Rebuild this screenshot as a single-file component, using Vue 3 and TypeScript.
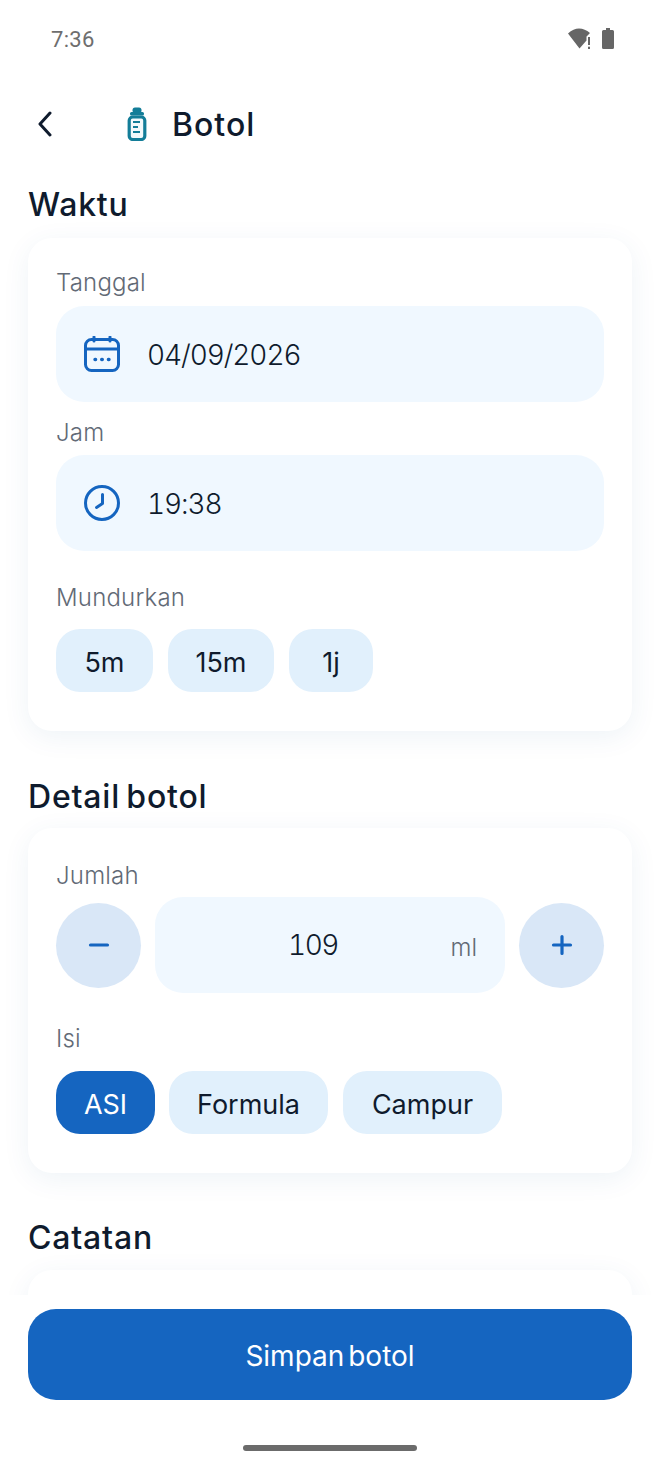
<template>
  <div class="screen">
    <div class="status-bar">
      <span class="clock">7:36</span>
      <div class="status-icons">
        <svg class="wifi" viewBox="0 0 24 21" fill="#666">
          <path d="M1 5.500C4.500 2 8.500 0.500 12 0.500c4 0 7.500 1.500 11 4.500L19.500 8.500v4L12.500 20.500z" />
          <rect x="21" y="9" width="2" height="8" />
          <rect x="21" y="18.700" width="2" height="2.300" />
        </svg>
        <svg class="battery" viewBox="0 0 12 21" fill="#666">
          <path d="M4 0h4v2h2.500a1.500 1.500 0 0 1 1.500 1.500v16a1.500 1.500 0 0 1-1.500 1.500h-9A1.500 1.500 0 0 1 0 19.500v-16A1.500 1.500 0 0 1 1.500 2H4z" />
        </svg>
      </div>
    </div>

    <header class="top-bar">
      <svg class="back" viewBox="0 0 16 26" fill="none" stroke="#0f1b2d" stroke-width="3" stroke-linecap="round" stroke-linejoin="round">
        <polyline points="13,2 3,13 13,24" />
      </svg>
      <svg class="bottle" viewBox="0 0 20 34">
        <rect x="5.500" y="0.500" width="9" height="5.500" rx="2.500" fill="#137d98" />
        <rect x="3" y="5" width="14" height="3.500" rx="1.500" fill="#137d98" />
        <rect x="2.200" y="10" width="15.600" height="22.500" rx="3.500" fill="#f2f9fb" stroke="#137d98" stroke-width="3.200" />
        <path d="M6 15h7M6 20h5M6 25h7" stroke="#137d98" stroke-width="1.800" />
      </svg>
      <h1 class="title">Botol</h1>
    </header>

    <h2 class="section-title waktu">Waktu</h2>
    <section class="card">
      <div class="label">Tanggal</div>
      <div class="field">
        <svg class="field-icon" viewBox="0 0 36 36" fill="none" stroke="#1565c0" stroke-width="3" stroke-linecap="round">
          <rect x="1.500" y="3.500" width="33" height="31" rx="6" />
          <path d="M1.500 13h33M10 1v4M26 1v4" />
          <path d="M11 23.500h.6M17.700 23.500h.6M24.400 23.500h.6" stroke-width="3.400" />
        </svg>
        <span class="field-value">04/09/2026</span>
      </div>
      <div class="label jam">Jam</div>
      <div class="field">
        <svg class="field-icon" viewBox="0 0 36 36" fill="none" stroke="#1565c0" stroke-width="3" stroke-linecap="round" stroke-linejoin="round">
          <circle cx="18" cy="18" r="16.500" />
          <polyline points="18.500,9.500 18.500,18.500 12.500,22.500" />
        </svg>
        <span class="field-value">19:38</span>
      </div>
      <div class="label mundur">Mundurkan</div>
      <div class="chips rewind-row">
        <button v-for="chip in rewindChips" :key="chip" class="chip rewind">{{ chip }}</button>
      </div>
    </section>

    <h2 class="section-title detail">Detail botol</h2>
    <section class="card card-detail">
      <div class="label">Jumlah</div>
      <div class="stepper">
        <button class="round-btn">
          <svg viewBox="0 0 22 22" stroke="#1565c0" stroke-width="3.200" stroke-linecap="round"><path d="M2.500 11h17" /></svg>
        </button>
        <div class="amount">
          <span class="amount-value">109</span>
          <span class="amount-unit">ml</span>
        </div>
        <button class="round-btn">
          <svg viewBox="0 0 22 22" stroke="#1565c0" stroke-width="3.200" stroke-linecap="round"><path d="M2.500 11h17M11 2.500v17" /></svg>
        </button>
      </div>
      <div class="label isi">Isi</div>
      <div class="chips">
        <button
          v-for="kind in kinds"
          :key="kind.name"
          class="chip"
          :class="[kind.cls, { active: kind.name === selectedKind }]"
        >{{ kind.name }}</button>
      </div>
    </section>

    <h2 class="section-title catatan">Catatan</h2>
    <section class="card card-note"></section>

    <!-- tombol simpan menempel di bawah, menutupi konten yang discroll -->
    <div class="footer">
      <button class="save">Simpan botol</button>
      <div class="home-bar"></div>
    </div>
  </div>
</template>

<script setup lang="ts">
interface Kind {
  name: string
  cls: string
}

const rewindChips: string[] = ['5m', '15m', '1j']

const kinds: Kind[] = [
  { name: 'ASI', cls: 'k-asi' },
  { name: 'Formula', cls: 'k-formula' },
  { name: 'Campur', cls: 'k-campur' },
]

const selectedKind = 'ASI'
</script>

<style>
html,
body {
  margin: 0;
  background: #fff;
}
</style>

<style scoped>
.screen {
  --primary: #1565c0;
  --ink: #0f1b2d;
  --muted: #626a76;
  --field: #f0f8ff;
  --chip: #e1f0fc;

  position: relative;
  width: 660px;
  height: 1467px;
  overflow: hidden;
  background: #fff;
  font-family: Inter, "Noto Sans", sans-serif;
  color: var(--ink);
}

.status-bar {
  height: 78px;
  display: flex;
  align-items: center;
  justify-content: space-between;
  padding: 0 46px 0 51px;
}

.clock {
  font-family: Roboto, sans-serif;
  font-size: 22px;
  color: #6e6e6e;
  letter-spacing: 0.3px;
  padding-top: 1px;
}

.status-icons {
  display: flex;
  align-items: center;
  gap: 11px;
  margin-top: -1px;
}

.wifi {
  width: 24px;
  height: 21px;
}

.battery {
  width: 12px;
  height: 21px;
}

.top-bar {
  height: 92px;
  display: flex;
  align-items: center;
  padding-left: 37px;
}

.back {
  width: 16px;
  height: 26px;
}

.bottle {
  width: 20px;
  height: 34px;
  margin-left: 74px;
}

.title {
  margin: 0 0 0 25px;
  font-size: 32px;
  font-weight: 500;
  letter-spacing: 1px;
}

.section-title {
  margin: 0 0 -1px;
  padding: 1px 0 0 28px;
  font-size: 32px;
  line-height: 40px;
  font-weight: 500;
  letter-spacing: 0.8px;
  word-spacing: -3px;
}

.waktu {
  margin-top: 14px;
}

.detail {
  margin-top: 45px;
}

.catatan {
  margin-top: 44px;
}

.card {
  margin: 14px 28px 0;
  padding: 28px;
  height: 493px;
  box-sizing: border-box;
  background: #fff;
  border-radius: 24px;
  box-shadow: 0 6px 28px rgba(21, 80, 140, 0.07);
}

.card-detail {
  margin-top: 12px;
  padding-top: 31px;
  height: 345px;
}

.card-note {
  margin-top: 13px;
  height: 200px;
}

.label {
  font-size: 24px;
  line-height: 34px;
  font-weight: 300;
  letter-spacing: 0.2px;
  color: var(--muted);
}

.jam {
  margin-top: 14px;
  margin-bottom: -1px;
}

.mundur {
  margin-top: 30px;
}

.isi {
  margin-top: 29px;
}

.field {
  margin-top: 6px;
  height: 96px;
  display: flex;
  align-items: center;
  padding-left: 28px;
  background: var(--field);
  border-radius: 28px;
}

.field-icon {
  width: 36px;
  height: 36px;
}

.field-value {
  margin-left: 27px;
  padding-top: 1px;
  font-size: 28px;
  font-weight: 300;
  font-variant-numeric: tabular-nums;
  letter-spacing: -1.1px;
}

.chips {
  display: flex;
  gap: 14px;
  margin-top: 15px;
}

.rewind-row {
  gap: 15px;
  margin-top: 14px;
}

.chip {
  height: 63px;
  padding: 4px 0 0;
  border: none;
  border-radius: 24px;
  background: var(--chip);
  font: inherit;
  font-size: 27px;
  font-weight: 400;
  color: var(--ink);
}

.rewind:nth-child(1) {
  width: 97px;
}

.rewind:nth-child(2) {
  width: 106px;
}

.rewind:nth-child(3) {
  width: 84px;
}

.k-asi {
  width: 99px;
}

.k-formula {
  width: 159px;
  margin-right: 1px;
}

.k-campur {
  width: 159px;
}

.chip.active {
  background: var(--primary);
  color: #fff;
}

.stepper {
  margin-top: 4px;
  display: flex;
  align-items: center;
  gap: 14px;
}

.round-btn {
  flex: none;
  width: 85px;
  height: 85px;
  padding: 0;
  border: none;
  border-radius: 50%;
  background: #d9e7f7;
  display: flex;
  align-items: center;
  justify-content: center;
}

.round-btn svg {
  width: 22px;
  height: 22px;
}

.amount {
  position: relative;
  flex: 1;
  height: 96px;
  display: flex;
  align-items: center;
  justify-content: center;
  background: var(--field);
  border-radius: 28px;
}

.amount-value {
  font-size: 28px;
  font-weight: 300;
  font-variant-numeric: tabular-nums;
  letter-spacing: -1.5px;
  margin-right: 34px;
}

.amount-unit {
  position: absolute;
  right: 28px;
  top: 36px;
  font-size: 24px;
  font-weight: 300;
  color: var(--muted);
}

.footer {
  position: absolute;
  left: 0;
  right: 0;
  bottom: 0;
  height: 172px;
  background: #fff;
  display: flex;
  flex-direction: column;
  align-items: center;
}

.save {
  margin-top: 14px;
  width: 604px;
  height: 91px;
  padding: 2px 0 0;
  border: none;
  border-radius: 28px;
  background: var(--primary);
  color: #fff;
  font: inherit;
  font-size: 28px;
  font-weight: 400;
  word-spacing: -4px;
}

.home-bar {
  margin-top: 45px;
  width: 174px;
  height: 6px;
  border-radius: 3px;
  background: #6b6b6b;
}
</style>
